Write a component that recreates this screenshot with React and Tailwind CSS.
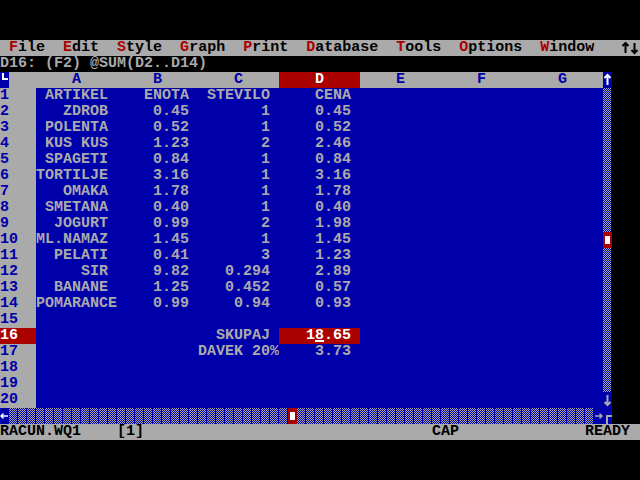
import React from "react";

// DOS text-mode screen: 9px wide cells, 16px rows
const MENU = ["File", "Edit", "Style", "Graph", "Print", "Database", "Tools", "Options", "Window"];
const COLS = ["A", "B", "C", "D", "E", "F", "G"];

const DATA = {
  1: ["ARTIKEL", "ENOTA", "STEVILO", "CENA"],
  2: ["ZDROB", "0.45", "1", "0.45"],
  3: ["POLENTA", "0.52", "1", "0.52"],
  4: ["KUS KUS", "1.23", "2", "2.46"],
  5: ["SPAGETI", "0.84", "1", "0.84"],
  6: ["TORTILJE", "3.16", "1", "3.16"],
  7: ["OMAKA", "1.78", "1", "1.78"],
  8: ["SMETANA", "0.40", "1", "0.40"],
  9: ["JOGURT", "0.99", "2", "1.98"],
  10: ["ML.NAMAZ", "1.45", "1", "1.45"],
  11: ["PELATI", "0.41", "3", "1.23"],
  12: ["SIR", "9.82", "0.294", "2.89"],
  13: ["BANANE", "1.25", "0.452", "0.57"],
  14: ["POMARANCE", "0.99", "0.94", "0.93"],
  16: ["", "", "SKUPAJ", "18.65"],
  17: ["", "", "DAVEK 20%", "3.73"],
};

const fmt = (s) => (s.length >= 9 ? s : s.padStart(8) + " ");

const PATTERN =
  "bg-[linear-gradient(90deg,transparent_8px,#0000aa_8px),conic-gradient(#aaaaaa_25%,#0000aa_0_50%,#aaaaaa_0_75%,#0000aa_0)] bg-[length:9px_100%,2px_2px]";

// block-style arrows like the VGA font glyphs
const ARROWS = {
  up: "M4.5 3 V13 M1.5 6 L4.5 3 L7.5 6",
  down: "M4.5 3 V13 M1.5 10 L4.5 13 L7.5 10",
  left: "M1 8 H8 M3.5 5.5 L1 8 L3.5 10.5",
  right: "M1 8 H8 M5.5 5.5 L8 8 L5.5 10.5",
};

function Arrow({ dir = "up", color = "#000" }) {
  return (
    <svg width="9" height="16" viewBox="0 0 9 16" className="shrink-0">
      <path d={ARROWS[dir]} stroke={color} strokeWidth={dir === "left" || dir === "right" ? 1.5 : 2} fill="none" />
    </svg>
  );
}

function Thumb() {
  return (
    <span className="w-[9px] h-4 shrink-0 bg-[#aa0000] flex items-center justify-center">
      <span className="w-[5px] h-2 bg-white" />
    </span>
  );
}

function ScrollCell({ row }) {
  if (row === 10) return <Thumb />;
  if (row === 20)
    return (
      <span className="w-[9px] h-4 shrink-0 bg-[#0000aa] flex">
        <Arrow dir="down" color="#aaaaaa" />
      </span>
    );
  return <span className={`w-[9px] h-4 shrink-0 ${PATTERN}`} />;
}

function DataRow({ row }) {
  const cells = DATA[row] || [];
  const current = row === 16;
  return (
    <div className="flex h-4">
      <span
        className={`w-[36px] shrink-0 whitespace-pre ${current ? "bg-[#aa0000] text-white" : "bg-[#aaaaaa] text-[#0000aa]"}`}
      >
        {row}
      </span>
      {COLS.map((c, i) => {
        const text = cells[i] || "";
        if (current && c === "D") {
          return (
            <span key={c} className="w-[81px] shrink-0 whitespace-pre bg-[#aa0000] text-white">
              {"   1"}
              <span className="underline decoration-2 underline-offset-[1px]">8</span>
              {".65 "}
            </span>
          );
        }
        return (
          <span key={c} className="w-[81px] shrink-0 whitespace-pre bg-[#0000aa] text-[#aaaaaa]">
            {text ? fmt(text) : ""}
          </span>
        );
      })}
      <ScrollCell row={row} />
      <span className="flex-1 bg-black" />
    </div>
  );
}

export default function App() {
  const rows = Array.from({ length: 20 }, (_, i) => i + 1);
  return (
    <div className="w-[640px] h-[480px] bg-black py-10 font-['Liberation_Mono','DejaVu_Sans_Mono',monospace] text-[15px] leading-4 font-bold overflow-hidden">
      {/* menu bar */}
      <div className="flex h-4 bg-[#aaaaaa] text-black whitespace-pre">
        <span> </span>
        {MENU.map((m) => (
          <span key={m} className="whitespace-pre">
            <span className="text-[#aa0000]">{m[0]}</span>
            {m.slice(1) + "  "}
          </span>
        ))}
        <span className="w-[9px] shrink-0" />
        <Arrow dir="up" />
        <Arrow dir="down" />
      </div>

      {/* input line */}
      <div className="h-4 bg-black text-[#aaaaaa] whitespace-pre">D16: (F2) @SUM(D2..D14)</div>

      {/* column headers */}
      <div className="flex h-4">
        <span className="w-[9px] h-4 shrink-0 bg-[#0000aa] relative">
          <span className="absolute left-[2px] top-[1px] w-[6px] h-[7px] border-l-2 border-b-2 border-white" />
        </span>
        <span className="w-[27px] shrink-0 bg-[#aaaaaa]" />
        {COLS.map((c) => (
          <span
            key={c}
            className={`w-[81px] shrink-0 whitespace-pre ${c === "D" ? "bg-[#aa0000] text-white" : "bg-[#aaaaaa] text-[#0000aa]"}`}
          >
            {"    " + c}
          </span>
        ))}
        <span className="w-[9px] shrink-0 bg-[#0000aa] flex">
          <Arrow dir="up" color="#ffffff" />
        </span>
        <span className="flex-1 bg-black" />
      </div>

      {rows.map((r) => (
        <DataRow key={r} row={r} />
      ))}

      {/* horizontal scroll bar */}
      <div className="flex h-4">
        <span className="w-[9px] shrink-0 bg-[#0000aa] flex">
          <Arrow dir="left" color="#ffffff" />
        </span>
        <span className={`w-[279px] shrink-0 ${PATTERN}`} />
        <Thumb />
        <span className={`w-[297px] shrink-0 ${PATTERN}`} />
        <span className="w-[9px] shrink-0 bg-[#0000aa] flex">
          <Arrow dir="right" color="#aaaaaa" />
        </span>
        <span className="w-[9px] shrink-0 bg-[#0000aa] relative">
          <span className="absolute left-[3px] top-[7px] w-[6px] h-[9px] border-l-2 border-t-2 border-[#aaaaaa]" />
        </span>
        <span className="flex-1 bg-black" />
      </div>

      {/* status line */}
      <div className="flex h-4 bg-[#aaaaaa] text-black whitespace-pre">
        <span className="w-[432px] shrink-0 whitespace-pre">{"RACUN.WQ1    [1]"}</span>
        <span className="w-[153px] shrink-0">CAP</span>
        <span>READY</span>
      </div>
    </div>
  );
}
